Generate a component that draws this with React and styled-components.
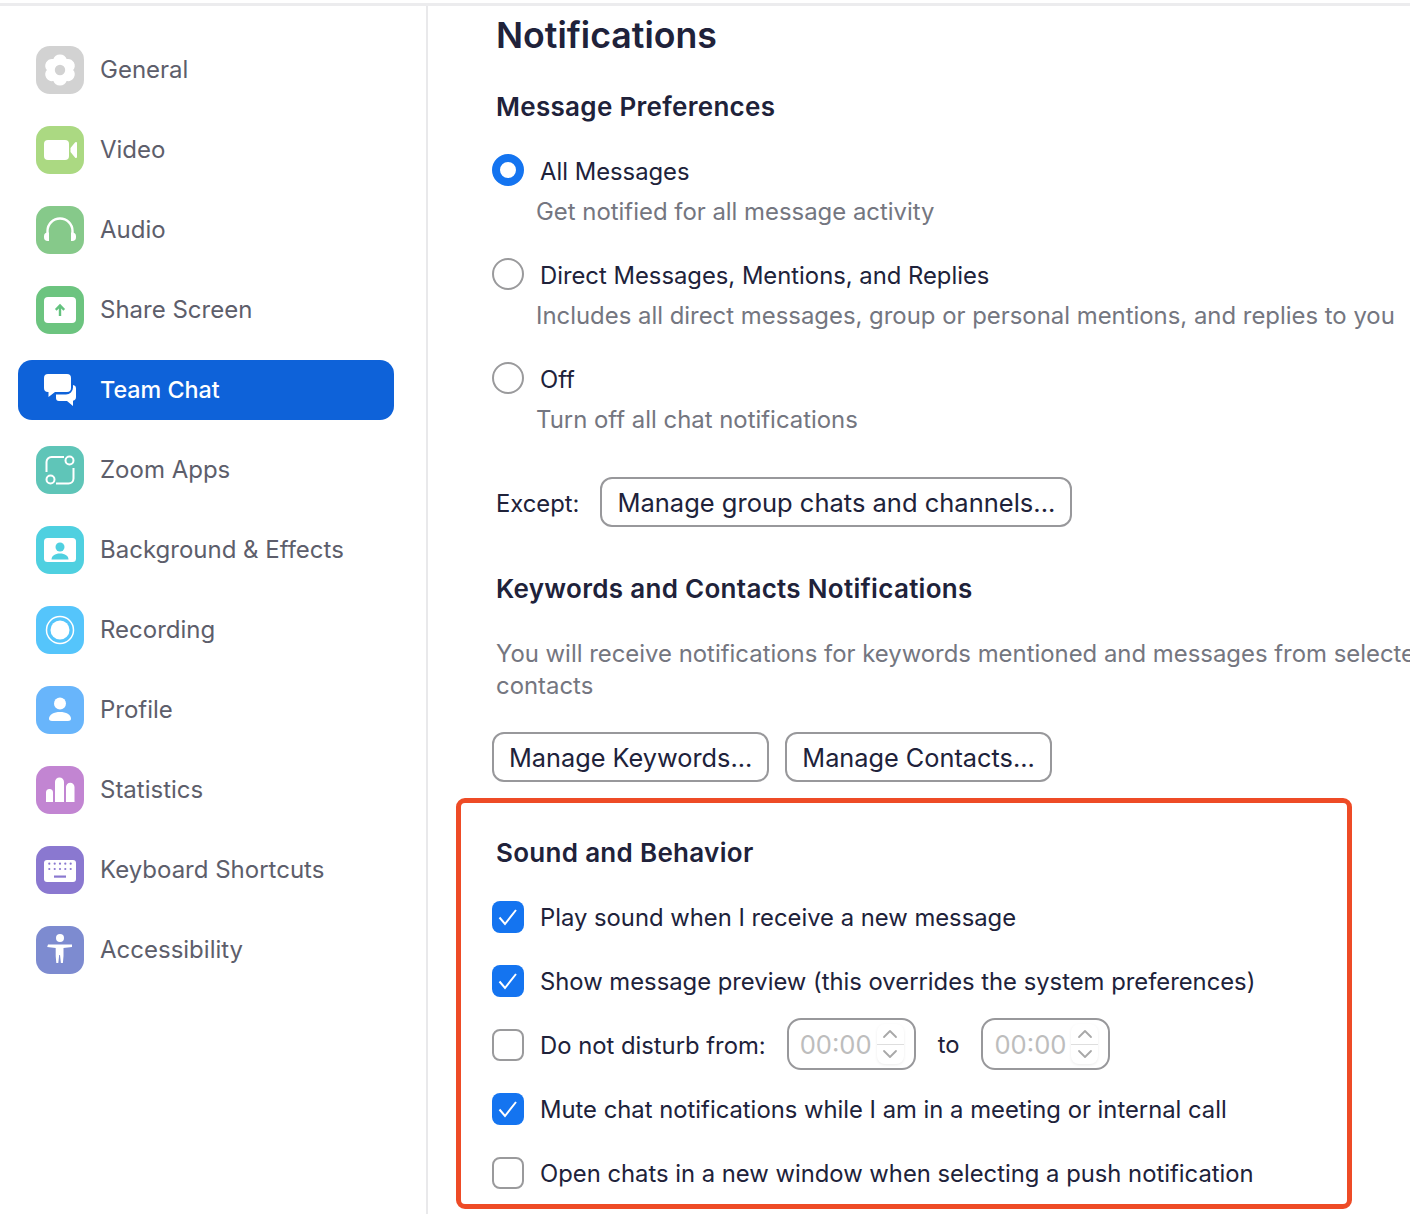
import styled, { createGlobalStyle } from 'styled-components';
import { ChevronUp, ChevronDown } from 'lucide-react';

const GlobalStyle = createGlobalStyle`
  html, body {
    margin: 0;
    padding: 0;
    background: #fff;
  }
  body {
    font-family: Inter, "Liberation Sans", sans-serif;
    overflow: hidden;
  }
`;

const GeneralIcon = () => (
  <svg width="48" height="48" viewBox="0 0 48 48">
    <path
      fill="#fff"
      fillRule="evenodd"
      d="M24 8.500c3.400 0 5.800 2.100 6.600 4.600 2.600-.6 5.600.4 7.200 3.200 1.700 2.900 1.100 6-.7 7.700 1.800 1.900 2.400 4.900.7 7.800-1.600 2.800-4.600 3.800-7.200 3.200-.8 2.500-3.200 4.500-6.600 4.500s-5.800-2-6.600-4.500c-2.600.6-5.600-.4-7.200-3.200-1.700-2.900-1.100-5.900.7-7.800-1.800-1.700-2.400-4.800-.7-7.700 1.600-2.800 4.600-3.800 7.200-3.200.8-2.500 3.200-4.600 6.600-4.600zM24 18.800a5.200 5.200 0 1 0 0 10.400 5.200 5.200 0 0 0 0-10.400z"
    />
  </svg>
);

const VideoIcon = () => (
  <svg width="48" height="48" viewBox="0 0 48 48">
    <rect x="8" y="14" width="25" height="20" rx="4" fill="#fff" />
    <path fill="#fff" d="M34.500 22l4.500-5.500c.8-1 2-.5 2 .8v13.400c0 1.300-1.200 1.800-2 .8L34.500 26z" />
  </svg>
);

const AudioIcon = () => (
  <svg width="48" height="48" viewBox="0 0 48 48">
    <path d="M11.500 33V25a12.500 12.500 0 0 1 25 0v8" fill="none" stroke="#fff" strokeWidth="2.400" />
    <path fill="#fff" d="M13 26.500v8.500h-1.200A3.800 3.800 0 0 1 8 31.200v-1a3.800 3.800 0 0 1 3.800-3.700zM35 26.500v8.500h1.200a3.800 3.800 0 0 0 3.800-3.800v-1a3.800 3.800 0 0 0-3.800-3.700z" />
  </svg>
);

const ShareIcon = () => (
  <svg width="48" height="48" viewBox="0 0 48 48">
    <rect x="8" y="11" width="32" height="26" rx="4" fill="#fff" />
    <path d="M24 30v-10M19.800 23.800 24 19.500l4.200 4.300" fill="none" stroke="#63c27e" strokeWidth="2.400" />
  </svg>
);

const ChatIcon = () => (
  <svg width="48" height="48" viewBox="0 0 48 48" fill="#fff">
    <path d="M12 8h19a4 4 0 0 1 4 4v10a4 4 0 0 1-4 4H19l-6.500 5v-5H12a4 4 0 0 1-4-4V12a4 4 0 0 1 4-4z" />
    <path d="M37 19a3.500 3.500 0 0 1 3 3.500V31a4 4 0 0 1-3 3.800V40l-6-5h-8a3 3 0 0 1-3-3v-3.500h10a7 7 0 0 0 7-7z" />
  </svg>
);

const AppsIcon = () => (
  <svg width="48" height="48" viewBox="0 0 48 48" fill="none" stroke="#fff" strokeWidth="2">
    <path d="M28 11H15.500a5 5 0 0 0-5 5v10" />
    <path d="M37.500 22v10.500a5 5 0 0 1-5 5H20" />
    <circle cx="33.500" cy="14.500" r="4" />
    <circle cx="14.500" cy="33.500" r="4" />
  </svg>
);

const BackgroundIcon = () => (
  <svg width="48" height="48" viewBox="0 0 48 48">
    <rect x="8" y="12" width="32" height="24" rx="3.500" fill="#fff" />
    <circle cx="24" cy="21" r="4.500" fill="#4fd0e0" />
    <path fill="#4fd0e0" d="M15.500 33.500c0-3.500 3.500-6 8.500-6s8.500 2.500 8.500 6z" />
  </svg>
);

const RecordIcon = () => (
  <svg width="48" height="48" viewBox="0 0 48 48">
    <circle cx="24" cy="24" r="13.500" fill="none" stroke="#fff" strokeWidth="1.500" />
    <circle cx="24" cy="24" r="9.500" fill="#fff" />
  </svg>
);

const ProfileIcon = () => (
  <svg width="48" height="48" viewBox="0 0 48 48">
    <circle cx="24" cy="17.500" r="6" fill="#fff" />
    <path fill="#fff" d="M13 32.500c0-3.800 5-6.500 11-6.500s11 2.700 11 6.500c0 1.800-1.300 2.500-3 2.500H16c-1.700 0-3-.7-3-2.500z" />
  </svg>
);

const StatsIcon = () => (
  <svg width="48" height="48" viewBox="0 0 48 48" fill="#fff">
    <path d="M10 26.500a3.500 3.500 0 0 1 7 0V36h-7zM19 16a4.500 4.500 0 0 1 9 0v20h-9zM30 21a4.200 4.200 0 0 1 8.500 0v15H30z" />
  </svg>
);

const KeyboardIcon = () => {
  const keys = [];
  [17.700, 23].forEach((y) => {
    [13.300, 18.700, 24, 29.300, 34.700].forEach((x) =>
      keys.push(<circle key={`${x}-${y}`} cx={x} cy={y} r="1.100" fill="#8a78d0" />)
    );
  });
  return (
    <svg width="48" height="48" viewBox="0 0 48 48">
      <rect x="8" y="14" width="32" height="22" rx="3" fill="#fff" />
      {keys}
      <rect x="18" y="29.500" width="12" height="2.200" fill="#8a78d0" />
    </svg>
  );
};

const AccessIcon = () => (
  <svg width="48" height="48" viewBox="0 0 48 48" fill="#fff">
    <circle cx="24" cy="12" r="4" />
    <path d="M12 18.500h24v2.600l-8.500 1v8l-.6 7h-2l-.9-8h-.8l-.9 8h-2l-.6-7v-8l-8.500-1z" />
  </svg>
);

const TickIcon = () => (
  <svg width="32" height="32" viewBox="0 0 32 32" fill="none" stroke="#fff" strokeWidth="2">
    <path d="M7.500 16.500 13 23 24 9" />
  </svg>
);

const menu = [
  { label: 'General', color: '#d2d2d2', Icon: GeneralIcon },
  { label: 'Video', color: '#abd982', Icon: VideoIcon },
  { label: 'Audio', color: '#86c98a', Icon: AudioIcon },
  { label: 'Share Screen', color: '#6cc47f', Icon: ShareIcon },
  { label: 'Team Chat', Icon: ChatIcon, active: true },
  { label: 'Zoom Apps', color: '#5fc5b8', Icon: AppsIcon },
  { label: 'Background & Effects', color: '#4fd0e0', Icon: BackgroundIcon },
  { label: 'Recording', color: '#55c5fb', Icon: RecordIcon },
  { label: 'Profile', color: '#68b5fb', Icon: ProfileIcon },
  { label: 'Statistics', color: '#c285d2', Icon: StatsIcon },
  { label: 'Keyboard Shortcuts', color: '#8a78d0', Icon: KeyboardIcon },
  { label: 'Accessibility', color: '#7d8bd0', Icon: AccessIcon },
];

const radios = [
  { label: 'All Messages', hint: 'Get notified for all message activity', on: true },
  { label: 'Direct Messages, Mentions, and Replies', hint: 'Includes all direct messages, group or personal mentions, and replies to you' },
  { label: 'Off', hint: 'Turn off all chat notifications' },
];

const TimeField = () => (
  <TimeBox>
    <TimeText>00:00</TimeText>
    <Stepper>
      <StepButton>
        <ChevronUp size={24} strokeWidth={1.8} />
      </StepButton>
      <StepButton>
        <ChevronDown size={24} strokeWidth={1.8} />
      </StepButton>
    </Stepper>
  </TimeBox>
);

const CheckBox = ({ on }) => <CheckMark $on={on}>{on && <TickIcon />}</CheckMark>;

const App = () => {
  return (
    <Page>
      <GlobalStyle />
      <Sidebar>
        {menu.map(({ label, color, Icon, active }) =>
          active ? (
            <ActiveItem key={label}>
              <Icon />
              <ItemLabel $active>{label}</ItemLabel>
            </ActiveItem>
          ) : (
            <Item key={label}>
              <IconTile $color={color}>
                <Icon />
              </IconTile>
              <ItemLabel>{label}</ItemLabel>
            </Item>
          )
        )}
      </Sidebar>
      <Main>
        <Title>Notifications</Title>
        <Heading>Message Preferences</Heading>
        <RadioList>
          {radios.map((r) => (
            <RadioBlock key={r.label}>
              <OptionRow>
                <Radio $on={r.on} />
                <RadioText>{r.label}</RadioText>
              </OptionRow>
              <Hint>{r.hint}</Hint>
            </RadioBlock>
          ))}
        </RadioList>
        <ExceptRow>
          <RadioText>Except:</RadioText>
          <PlainButton $size={25.5}>Manage group chats and channels...</PlainButton>
        </ExceptRow>
        <KeywordsHeading>Keywords and Contacts Notifications</KeywordsHeading>
        <Description>
          You will receive notifications for keywords mentioned and messages from selected
          <br />
          contacts
        </Description>
        <ButtonRow>
          <PlainButton>Manage Keywords...</PlainButton>
          <PlainButton>Manage Contacts...</PlainButton>
        </ButtonRow>
        <Highlight>
          <SoundHeading>Sound and Behavior</SoundHeading>
          <CheckList>
            <CheckRow>
              <CheckBox on />
              <OptionText>Play sound when I receive a new message</OptionText>
            </CheckRow>
            <CheckRow>
              <CheckBox on />
              <OptionText>Show message preview (this overrides the system preferences)</OptionText>
            </CheckRow>
            <CheckRow>
              <CheckBox />
              <OptionText>Do not disturb from:</OptionText>
              <TimeGroup>
                <TimeField />
                <OptionText>to</OptionText>
                <TimeField />
              </TimeGroup>
            </CheckRow>
            <CheckRow>
              <CheckBox on />
              <OptionText>Mute chat notifications while I am in a meeting or internal call</OptionText>
            </CheckRow>
            <CheckRow>
              <CheckBox />
              <OptionText>Open chats in a new window when selecting a push notification</OptionText>
            </CheckRow>
          </CheckList>
        </Highlight>
      </Main>
    </Page>
  );
};

export default App;

const Page = styled.div`
  width: 1410px;
  height: 1211px;
  margin-top: 3px;
  display: flex;
  overflow: hidden;
  border-top: 3px solid #ececee;
  box-sizing: border-box;
`;
const Sidebar = styled.nav`
  width: 428px;
  flex-shrink: 0;
  box-sizing: border-box;
  border-right: 2px solid #e9e9eb;
  padding: 34px 32px 0 18px;
  display: flex;
  flex-direction: column;
  gap: 20px;
`;
const Item = styled.div`
  height: 60px;
  display: flex;
  align-items: center;
  padding-left: 18px;
  gap: 16px;
`;
const ActiveItem = styled(Item)`
  background: #0e62d9;
  border-radius: 14px;
`;
const IconTile = styled.div`
  width: 48px;
  height: 48px;
  border-radius: 14px;
  background: ${(p) => p.$color};
  flex-shrink: 0;
`;
const ItemLabel = styled.span`
  padding-bottom: 2px;
  font-size: ${(p) => (p.$active ? '23.300px' : '24px')};
  color: ${(p) => (p.$active ? '#fff' : '#5d5e6b')};
  font-weight: ${(p) => (p.$active ? 500 : 400)};
`;
const Main = styled.main`
  flex: 1;
  min-width: 0;
  padding-left: 29px;
  display: flex;
  flex-direction: column;
  align-items: flex-start;
`;
const Title = styled.h1`
  margin: 5px 0 0 39px;
  font-size: 35.700px;
  line-height: 48px;
  font-weight: 600;
  color: #20223a;
`;
const Heading = styled.h2`
  margin: 30px 0 0 39px;
  font-size: 26px;
  letter-spacing: 0.3px;
  line-height: 36px;
  font-weight: 600;
  color: #20223a;
`;
const RadioList = styled.div`
  margin: 29px 0 0 35px;
  display: flex;
  flex-direction: column;
  gap: 30px;
`;
const RadioBlock = styled.div`
  display: flex;
  flex-direction: column;
  gap: 10px;
`;
const OptionRow = styled.div`
  display: flex;
  align-items: center;
  gap: 16px;
  height: 32px;
`;
const Radio = styled.span`
  width: 32px;
  height: 32px;
  border-radius: 50%;
  box-sizing: border-box;
  flex-shrink: 0;
  border: ${(p) => (p.$on ? '8px solid #1474f0' : '2px solid #9a9a9c')};
`;
const OptionText = styled.span`
  padding-top: 2px;
  font-size: 23.800px;
  line-height: 32px;
  color: #20223a;
  white-space: nowrap;
`;
const RadioText = styled(OptionText)`
  padding-top: 4px;
`;
const Hint = styled.div`
  margin-left: 44px;
  font-size: 23.900px;
  line-height: 32px;
  color: #747680;
  white-space: nowrap;
`;
const ExceptRow = styled.div`
  margin: 41px 0 0 39px;
  display: flex;
  align-items: center;
  gap: 21px;
`;
const PlainButton = styled.button`
  height: 50px;
  padding: 0 15px;
  background: #fff;
  border: 2px solid #98989b;
  border-radius: 12px;
  font: 400 ${(p) => p.$size || 25.3}px Inter, "Liberation Sans", sans-serif;
  color: #20223a;
  white-space: nowrap;
`;
const KeywordsHeading = styled(Heading)`
  margin-top: 44px;
`;
const Description = styled.p`
  margin: 31px 0 0 39px;
  width: 1000px;
  font-size: 23.900px;
  line-height: 32px;
  color: #747680;
  white-space: nowrap;
`;
const ButtonRow = styled.div`
  margin: 30px 0 0 35px;
  display: flex;
  gap: 16px;
`;
const Highlight = styled.section`
  margin: 16px 0 0 -1px;
  width: 896px;
  height: 411px;
  box-sizing: border-box;
  border: 5px solid #ee4b26;
  border-radius: 9px;
  padding: 17px 0 0 31px;
  display: flex;
  flex-direction: column;
`;
const SoundHeading = styled(Heading)`
  margin: 15px 0 0 4px;
`;
const CheckList = styled.div`
  margin-top: 30px;
  display: flex;
  flex-direction: column;
  gap: 32px;
`;
const CheckRow = styled.div`
  height: 32px;
  display: flex;
  align-items: center;
  gap: 16px;
`;
const CheckMark = styled.span`
  width: 32px;
  height: 32px;
  border-radius: 8px;
  box-sizing: border-box;
  flex-shrink: 0;
  display: flex;
  align-items: center;
  justify-content: center;
  background: ${(p) => (p.$on ? '#1474f0' : '#fff')};
  border: ${(p) => (p.$on ? 'none' : '2px solid #9a9a9c')};
`;
const TimeGroup = styled.div`
  display: flex;
  align-items: center;
  margin: 0 0 2px 5px;
  gap: 22px;
`;
const TimeBox = styled.div`
  width: 129px;
  height: 52px;
  box-sizing: border-box;
  border: 2px solid #98989b;
  border-radius: 14px;
  display: flex;
  align-items: center;
  padding-left: 11px;
  gap: 5px;
`;
const TimeText = styled.span`
  font-size: 25.600px;
  color: #bdbdbd;
`;
const Stepper = styled.div`
  width: 27px;
  height: 40px;
  border-radius: 8px;
  box-shadow: 0 1px 3px rgba(0, 0, 0, 0.08);
  display: flex;
  flex-direction: column;
`;
const StepButton = styled.span`
  flex: 1;
  display: flex;
  align-items: center;
  justify-content: center;
  color: #a8a8a8;
  overflow: hidden;
  & + & {
    border-top: 1px solid #dedede;
  }
`;
